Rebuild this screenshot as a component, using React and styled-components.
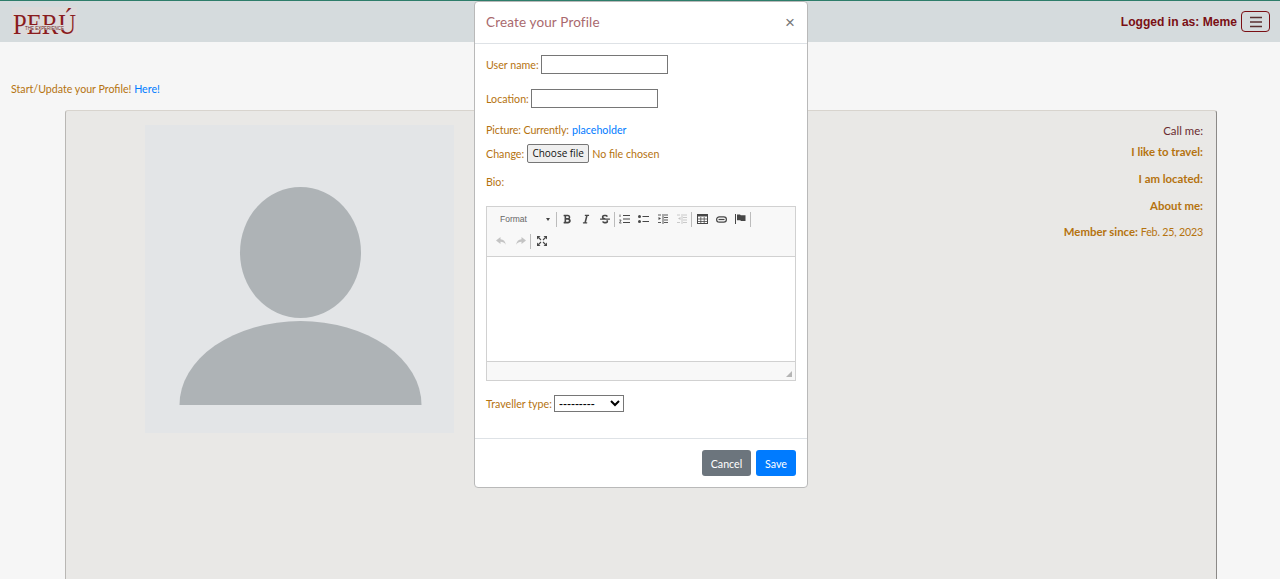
import React from 'react'
import styled, { createGlobalStyle } from 'styled-components'
import { FaBold, FaItalic, FaStrikethrough } from 'react-icons/fa'

const GlobalStyle = createGlobalStyle`
  html, body { margin:0; height:100%; overflow:hidden; background:#f6f6f6; }
  body { font-family:Lato, "Open Sans", sans-serif; font-size:10.7px; color:#b5730f; }
  * { box-sizing:border-box; }
`;

const Page = styled.div`
  position:relative;
  height:579px;
  overflow:hidden;
`;

const Nav = styled.nav`
  height:42px;
  border-top:1px solid #2e7d6a;
  background:#d5dbdd;
  display:flex;
  align-items:center;
  justify-content:space-between;
  padding:0 10px 0 12px;
`;

const LogoBox = styled.div`
  width:65px;
  height:28px;
  margin-top:-1px;
  background:#dcdada;
`;

const UserArea = styled.div`
  display:flex;
  align-items:center;
  gap:4px;
`;

const LoggedIn = styled.span`
  font-family:"Liberation Sans", Arial, sans-serif;
  font-size:12.1px;
  font-weight:700;
  color:#7a0f14;
`;

const Toggler = styled.button`
  width:29px;
  height:21px;
  padding:0;
  background:transparent;
  border:1px solid #7a0f14;
  border-radius:4px;
  display:flex;
  align-items:center;
  justify-content:center;
`;

const Intro = styled.p`
  margin:0;
  padding:40px 0 0 11px;
  height:68px;
  font-size:10.65px;
  line-height:14px;
`;

const Link = styled.a`
  color:#007bff;
  text-decoration:none;
`;

const Card = styled.section`
  margin:0 63px 0 65px;
  height:480px;
  background:#e9e8e6;
  border:1px solid #d8d4ce;
  border-left-color:#b9b7b4;
  border-right-color:#8b8987;
  border-radius:3px 3px 0 0;
  display:flex;
  justify-content:space-between;
  padding:14px 13px 0 79px;
`;

const Portrait = styled.div`
  width:309px;
  height:308px;
  background:#e3e5e7;
`;

const Details = styled.div`
  margin-top:-2px;
  text-align:right;
  font-size:11.4px;
  line-height:16px;
`;

const DetailRow = styled.p`
  margin:0 0 ${p => p.$after}px;
  font-weight:${p => (p.$strong ? 700 : 400)};
  color:${p => p.$color || '#b5730f'};
`;

const Plain = styled.span`
  font-weight:400;
  font-size:10.7px;
  letter-spacing:-.2px;
`;

const Modal = styled.div`
  position:absolute;
  left:474px;
  top:1px;
  width:334px;
  height:487px;
  background:#fff;
  border:1px solid #b9b9b9;
  border-radius:4px;
  display:flex;
  flex-direction:column;
`;

const ModalHeader = styled.header`
  height:42px;
  border-bottom:1px solid #dee2e6;
  padding:0 11px;
  display:flex;
  align-items:center;
  justify-content:space-between;
`;

const ModalTitle = styled.h5`
  margin:-2px 0 0;
  font-size:13.5px;
  font-weight:400;
  letter-spacing:.15px;
  color:#a9696d;
`;

const CloseButton = styled.button`
  padding:0;
  border:0;
  background:none;
  font-family:"Liberation Sans", sans-serif;
  font-size:17px;
  line-height:17px;
  color:#777;
  margin-right:1px;
`;

const ModalBody = styled.div`
  padding:11px 11px 0;
  flex:1;
`;

const Field = styled.div`
  display:flex;
  align-items:center;
  gap:${p => p.$gap ?? 2}px;
  height:${p => p.$height}px;
  margin-bottom:${p => p.$after}px;
`;

const TightLabel = styled.span`
  letter-spacing:-.12px;
`;

const TextInput = styled.input`
  width:127px;
  height:19px;
  padding:0 2px;
  border:1px solid #767676;
  border-radius:0;
  background:#fff;
`;

const FileButton = styled.button`
  width:62px;
  height:19px;
  padding:0;
  font-family:"Open Sans", sans-serif;
  font-size:10px;
  line-height:15px;
  color:#111;
  background:#efefef;
  border:1px solid #767676;
  border-radius:2px;
`;

const Editor = styled.div`
  width:310px;
  height:175px;
  margin-bottom:14px;
  border:1px solid #d1d1d1;
  display:flex;
  flex-direction:column;
`;

const Toolbar = styled.div`
  height:50px;
  padding:1px 0 0 4px;
  background:#f8f8f8;
  border-bottom:1px solid #d1d1d1;
`;

const ToolRow = styled.div`
  height:22px;
  display:flex;
  align-items:center;
`;

const FormatCombo = styled.div`
  width:65px;
  padding:0 6px 0 9px;
  display:flex;
  align-items:center;
  justify-content:space-between;
  font-family:"Liberation Sans", sans-serif;
  font-size:8.5px;
  color:#666;
`;

const ComboArrow = styled.span`
  width:0;
  height:0;
  border:2.5px solid transparent;
  border-top:3px solid #444;
  border-bottom:0;
`;

const ToolSep = styled.span`
  width:1px;
  height:15px;
  background:#bcbcbc;
`;

const ToolButton = styled.span`
  width:${p => p.$width || 19}px;
  height:16px;
  display:flex;
  align-items:center;
  justify-content:center;
  font-size:${p => p.$size || 10}px;
  color:${p => (p.$off ? '#c4c4c4' : '#474747')};
`;

const EditArea = styled.div`
  flex:1;
  background:#fff;
`;

const EditorFooter = styled.div`
  height:19px;
  background:#f8f8f8;
  border-top:1px solid #d1d1d1;
  display:flex;
  align-items:flex-end;
  justify-content:flex-end;
  padding:0 3px 3px 0;
`;

const ResizeGrip = styled.span`
  width:0;
  height:0;
  border-left:6px solid transparent;
  border-bottom:6px solid #b5b5b5;
`;

const SelectBox = styled.select`
  width:70px;
  height:17px;
  padding:0;
  font-family:"Liberation Sans", sans-serif;
  font-size:12px;
  color:#000;
  background:#fff;
  border:1px solid #767676;
  border-radius:0;
`;

const ModalFooter = styled.footer`
  height:49px;
  border-top:1px solid #dee2e6;
  display:flex;
  justify-content:flex-end;
  align-items:flex-start;
  gap:5px;
  padding:11px 11px 0;
`;

const ActionButton = styled.button`
  width:${p => p.$width}px;
  height:26px;
  padding:0;
  border:0;
  border-radius:3px;
  color:#fff;
  font-family:Lato, sans-serif;
  font-size:10.7px;
  background:${p => (p.$primary ? '#007bff' : '#6c757d')};
`;

const BurgerIcon = () => (
  <svg width="14" height="12" viewBox="0 0 14 12">
    <path d="M1 1.500h12M1 6h12M1 10.500h12" stroke="#5a3030" strokeWidth="1.400" />
  </svg>
)

const Logo = () => (
  <svg width="65" height="28" viewBox="0 0 65 28" overflow="visible">
    <text x="1" y="27" fontFamily="Liberation Serif, serif" fontSize="29" textLength="63" lengthAdjust="spacingAndGlyphs" fill="#8a1c1e">PERÚ</text>
    <rect x="12" y="18" width="41" height="5" fill="#dcdada" />
    <text x="13" y="22.500" fontFamily="Liberation Sans, sans-serif" fontSize="4.500" textLength="39" lengthAdjust="spacingAndGlyphs" fill="#6f1a1c">THE EXPERIENCE</text>
  </svg>
)

const Silhouette = () => (
  <svg width="309" height="308" viewBox="0 0 309 308">
    <ellipse cx="155.500" cy="127.500" rx="60.500" ry="65.500" fill="#aeb3b6" />
    <path d="M34.500 280A121 84 0 0 1 276.500 280Z" fill="#aeb3b6" />
  </svg>
)

const OrderedIcon = () => (
  <svg width="11" height="10" viewBox="0 0 11 10">
    <path d="M4 1.500h7M4 5h7M4 8.500h7" stroke="currentColor" strokeWidth="1.200" />
    <path d="M1 .5v2.500M.3 6h1.800L.5 9h2" stroke="currentColor" strokeWidth=".8" fill="none" />
  </svg>
)

const BulletIcon = () => (
  <svg width="11" height="8" viewBox="0 0 11 8">
    <circle cx="1.500" cy="1.500" r="1.500" fill="currentColor" />
    <circle cx="1.500" cy="6.500" r="1.500" fill="currentColor" />
    <path d="M4.500 1.500H11M4.500 6.500H11" stroke="currentColor" strokeWidth="1.200" />
  </svg>
)

const IndentIcon = ({ out }) => (
  <svg width="10" height="10" viewBox="0 0 10 10">
    <path d="M6 1h4M6 3.500h4M6 6h4M6 8.500h4M5 0v10M0 1h3M0 8.500h3" stroke="currentColor" strokeWidth=".9" />
    <path d={out ? 'M3.500 3v3L1 4.500Z' : 'M.5 3v3L3 4.500Z'} fill="currentColor" />
  </svg>
)

const TableIcon = () => (
  <svg width="11" height="10" viewBox="0 0 11 10">
    <rect x=".5" y=".5" width="10" height="9" fill="#fff" stroke="currentColor" />
    <path d="M0 1.500h11" stroke="currentColor" strokeWidth="2" />
    <path d="M0 5h11M0 7.500h11M3.800 3v7M7.200 3v7" stroke="currentColor" strokeWidth=".8" />
  </svg>
)

const LinkIcon = () => (
  <svg width="11" height="7" viewBox="0 0 11 7">
    <rect x=".6" y=".8" width="9.800" height="5.400" rx="2.700" fill="none" stroke="currentColor" strokeWidth="1.200" />
    <path d="M2.500 3.500h6" stroke="currentColor" strokeWidth="1.200" />
  </svg>
)

const FlagIcon = () => (
  <svg width="11" height="10" viewBox="0 0 11 10">
    <path d="M.5 0v10" stroke="currentColor" strokeWidth="1" />
    <path d="M2 .5h3l.8 .8H10.500v5.700H6l-.8-.8H2Z" fill="currentColor" />
  </svg>
)

const ArrowIcon = ({ flip }) => (
  <svg width="10" height="8" viewBox="0 0 10 8" style={flip ? { transform: 'scaleX(-1)' } : undefined}>
    <path d="M4.500 0L0 3.500 4.500 7V4.800C7 4.800 8.500 5.600 9.700 7.800 9.500 4.500 7.500 2.300 4.500 2.200Z" fill="currentColor" />
  </svg>
)

const ExpandIcon = () => (
  <svg width="10" height="10" viewBox="0 0 10 10">
    <path d="M0 0h3.500L0 3.500ZM10 0v3.500L6.500 0ZM0 10V6.500L3.500 10ZM10 10H6.500L10 6.500Z" fill="currentColor" />
    <path d="M1.500 1.500L4 4M8.500 1.500L6 4M1.500 8.500L4 6M8.500 8.500L6 6" stroke="currentColor" strokeWidth="1.100" />
  </svg>
)

const App = () => {
  return (
    <Page>
      <GlobalStyle />
      <Nav>
        <LogoBox><Logo /></LogoBox>
        <UserArea>
          <LoggedIn>Logged in as: Meme</LoggedIn>
          <Toggler aria-label="menu"><BurgerIcon /></Toggler>
        </UserArea>
      </Nav>
      <Intro>Start/Update your Profile! <Link href="#">Here!</Link></Intro>
      <Card>
        <Portrait><Silhouette /></Portrait>
        <Details>
          <DetailRow $after={5} $color="#6a2a30">Call me:</DetailRow>
          <DetailRow $after={11} $strong>I like to travel:</DetailRow>
          <DetailRow $after={11} $strong>I am located:</DetailRow>
          <DetailRow $after={10} $strong>About me:</DetailRow>
          <DetailRow $after={0} $strong>Member since: <Plain>Feb. 25, 2023</Plain></DetailRow>
        </Details>
      </Card>
      <Modal>
        <ModalHeader>
          <ModalTitle>Create your Profile</ModalTitle>
          <CloseButton aria-label="close">×</CloseButton>
        </ModalHeader>
        <ModalBody>
          <Field $height={19} $after={15}>User name: <TextInput /></Field>
          <Field $height={19} $after={13}>Location: <TextInput /></Field>
          <Field $height={16} $after={7} $gap={3}><TightLabel>Picture: Currently:</TightLabel> <Link href="#">placeholder</Link></Field>
          <Field $height={19} $after={10} $gap={3}>Change: <FileButton>Choose file</FileButton> No file chosen</Field>
          <Field $height={16} $after={17}>Bio:</Field>
          <Editor>
            <Toolbar>
              <ToolRow>
                <FormatCombo>Format<ComboArrow /></FormatCombo>
                <ToolSep />
                <ToolButton><FaBold /></ToolButton>
                <ToolButton><FaItalic /></ToolButton>
                <ToolButton><FaStrikethrough /></ToolButton>
                <ToolSep />
                <ToolButton><OrderedIcon /></ToolButton>
                <ToolButton><BulletIcon /></ToolButton>
                <ToolButton><IndentIcon /></ToolButton>
                <ToolButton $off><IndentIcon out /></ToolButton>
                <ToolSep />
                <ToolButton $width={20}><TableIcon /></ToolButton>
                <ToolButton><LinkIcon /></ToolButton>
                <ToolButton><FlagIcon /></ToolButton>
                <ToolSep />
              </ToolRow>
              <ToolRow>
                <ToolButton $width={20} $off><ArrowIcon /></ToolButton>
                <ToolButton $off><ArrowIcon flip /></ToolButton>
                <ToolSep />
                <ToolButton $width={21}><ExpandIcon /></ToolButton>
              </ToolRow>
            </Toolbar>
            <EditArea />
            <EditorFooter><ResizeGrip /></EditorFooter>
          </Editor>
          <Field $height={17} $after={0}>
            Traveller type:
            <SelectBox defaultValue="">
              <option value="">---------</option>
            </SelectBox>
          </Field>
        </ModalBody>
        <ModalFooter>
          <ActionButton $width={49}>Cancel</ActionButton>
          <ActionButton $width={40} $primary>Save</ActionButton>
        </ModalFooter>
      </Modal>
    </Page>
  );
}

export default App;
